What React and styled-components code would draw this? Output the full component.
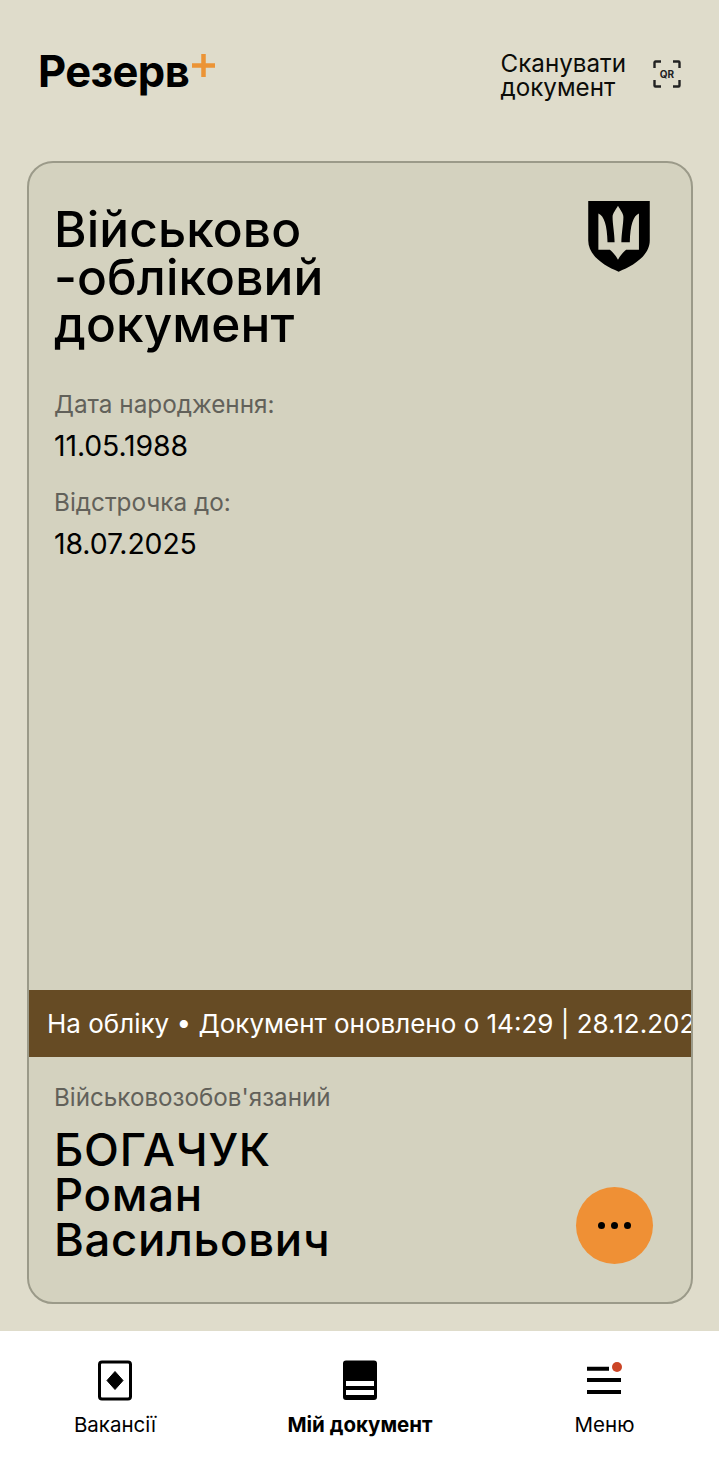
import React from 'react';
import styled, { createGlobalStyle } from 'styled-components';

const GlobalStyle = createGlobalStyle`
	html, body {
		margin: 0;
		padding: 0;
		background: #dfdccb;
	}
	* {
		box-sizing: border-box;
	}
`;

const Page = styled.div`
	width: 719px;
	height: 1473px;
	display: flex;
	flex-direction: column;
	background: #dfdccb;
	color: #000;
	font-family: Inter, "Noto Sans", sans-serif;
	overflow: hidden;
`;

const Header = styled.header`
	height: 161px;
	flex-shrink: 0;
	display: flex;
	align-items: flex-start;
	justify-content: space-between;
	padding: 49px 38px 0 38px;
`;

const Logo = styled.div`
	display: flex;
	align-items: flex-start;
	font-size: 43.5px;
	font-weight: 700;
	line-height: 44px;
	letter-spacing: -0.6px;
`;

const LogoPlus = styled.svg`
	width: 23px;
	height: 23px;
	margin: 5px 0 0 3px;
`;

const ScanButton = styled.div`
	display: flex;
	align-items: flex-start;
	gap: 27px;
`;

const ScanText = styled.div`
	font-size: 24.2px;
	line-height: 23.5px;
	margin-top: 3px;
	color: #0c0c08;
`;

const QrIcon = styled.div`
	position: relative;
	width: 28px;
	height: 28px;
	margin-top: 11px;
	display: flex;
	align-items: center;
	justify-content: center;
	font-size: 10px;
	font-weight: 700;
	color: #222;
`;

const QrCorners = styled.svg`
	position: absolute;
	inset: 0;
`;

const Card = styled.main`
	width: 666px;
	height: 1143px;
	margin-left: 27px;
	flex-shrink: 0;
	display: flex;
	flex-direction: column;
	background: #d4d2bf;
	border: 2px solid #9b9a89;
	border-radius: 26px;
	overflow: hidden;
`;

const CardTop = styled.div`
	flex: 1;
	display: flex;
	justify-content: space-between;
	align-items: flex-start;
	padding: 43px 41px 0 25px;
`;

const Title = styled.h1`
	margin: 0 0 41px;
	font-size: 49.6px;
	font-weight: 450;
	line-height: 47.5px;
	letter-spacing: 0.1px;
`;

const FieldLabel = styled.div`
	font-size: 24.3px;
	line-height: 28px;
	color: #62615a;
`;

const FieldValue = styled.div`
	font-size: 28.4px;
	font-weight: 420;
	line-height: 34px;
	margin: 11px 0 25px;
	letter-spacing: -0.1px;
`;

const Emblem = styled.svg`
	width: 62px;
	height: 71px;
	margin-top: -5px;
`;

const StatusBand = styled.div`
	height: 67px;
	flex-shrink: 0;
	display: flex;
	align-items: center;
	padding-left: 18px;
	background: #664b24;
	color: #fff;
	font-size: 26px;
	font-weight: 420;
	white-space: nowrap;
	overflow: hidden;
`;

const CardBottom = styled.div`
	position: relative;
	height: 245px;
	flex-shrink: 0;
	padding: 27px 25px 0;
`;

const Role = styled.div`
	font-size: 24.2px;
	line-height: 28px;
	color: #62615a;
`;

const Name = styled.div`
	margin-top: 15px;
	font-size: 45.5px;
	font-weight: 450;
	line-height: 45px;
	letter-spacing: 0.7px;
`;

const MoreButton = styled.div`
	position: absolute;
	right: 38px;
	bottom: 38px;
	width: 77px;
	height: 77px;
	display: flex;
	align-items: center;
	justify-content: center;
	gap: 6px;
	border-radius: 50%;
	background: #ef9035;
`;

const Dot = styled.span`
	width: 7px;
	height: 7px;
	border-radius: 50%;
	background: #000;
`;

const Nav = styled.nav`
	margin-top: 27px;
	flex: 1;
	display: grid;
	grid-template-columns: 230px 260px 229px;
	background: #fff;
`;

const NavItem = styled.div`
	display: flex;
	flex-direction: column;
	align-items: center;
	padding-top: 29px;
`;

const NavIcon = styled.svg`
	width: 36px;
	height: 42px;
`;

const NavLabel = styled.span`
	margin-top: 11px;
	font-size: 20.5px;
	line-height: 24px;
	font-weight: ${p => (p.$active ? 700 : 400)};
`;

const App = () => {
	return (
		<Page>
			<GlobalStyle />
			<Header>
				<Logo>
					Резерв
					<LogoPlus viewBox="0 0 23 23">
						<path d="M11.5 0v23M0 11.5h23" stroke="#ec9436" strokeWidth="4.5" />
					</LogoPlus>
				</Logo>
				<ScanButton>
					<ScanText>Сканувати<br />документ</ScanText>
					<QrIcon>
						<QrCorners viewBox="0 0 28 28" fill="none" stroke="#222" strokeWidth="2.4">
							<path d="M1.5 8V2.5a1 1 0 0 1 1-1H8M20 1.5h5.5a1 1 0 0 1 1 1V8M26.5 20v5.5a1 1 0 0 1-1 1H20M8 26.5H2.5a1 1 0 0 1-1-1V20" />
						</QrCorners>
						QR
					</QrIcon>
				</ScanButton>
			</Header>
			<Card>
				<CardTop>
					<div>
						<Title>Військово<br />-обліковий<br />документ</Title>
						<FieldLabel>Дата народження:</FieldLabel>
						<FieldValue>11.05.1988</FieldValue>
						<FieldLabel>Відстрочка до:</FieldLabel>
						<FieldValue>18.07.2025</FieldValue>
					</div>
					<Emblem viewBox="8 8 182 210">
						<path
							fillRule="evenodd"
							d="M8 8H190V125C190 170 140 200 98 217C56 200 8 170 8 125ZM38 45C55 52 64 80 65 130H86C86 105 80 75 80 55C80 45 90 33 96 22C102 33 112 45 112 55C112 75 106 105 106 130H131C132 80 141 52 158 45V152H120C112 158 102 170 96 182C90 170 80 158 72 152H38Z"
						/>
					</Emblem>
				</CardTop>
				<StatusBand>На обліку • Документ оновлено о 14:29 | 28.12.2024</StatusBand>
				<CardBottom>
					<Role>Військовозобов'язаний</Role>
					<Name>БОГАЧУК<br />Роман<br />Васильович</Name>
					<MoreButton>
						<Dot />
						<Dot />
						<Dot />
					</MoreButton>
				</CardBottom>
			</Card>
			<Nav>
				<NavItem>
					<NavIcon viewBox="0 0 36 42">
						<rect x="2.5" y="2" width="31" height="37" rx="2.5" fill="none" stroke="#000" strokeWidth="3" />
						<path d="M18 11.5L26 20.5L18 29.5L10 20.5Z" stroke="#000" strokeWidth="1" strokeLinejoin="round" />
					</NavIcon>
					<NavLabel>Вакансії</NavLabel>
				</NavItem>
				<NavItem>
					<NavIcon viewBox="0 0 36 42">
						<path
							fillRule="evenodd"
							d="M4 .5H32a3 3 0 0 1 3 3V37a3 3 0 0 1-3 3H4a3 3 0 0 1-3-3V3.5a3 3 0 0 1 3-3ZM4 21V26H32V21ZM4 30V35H32V30Z"
						/>
					</NavIcon>
					<NavLabel $active>Мій документ</NavLabel>
				</NavItem>
				<NavItem>
					<NavIcon viewBox="0 0 36 42">
						<path d="M0 8.7H22M0 20H34M0 32H34" stroke="#000" strokeWidth="4" />
						<circle cx="30" cy="7" r="5" fill="#cb4526" />
					</NavIcon>
					<NavLabel>Меню</NavLabel>
				</NavItem>
			</Nav>
		</Page>
	);
};

export default App;
